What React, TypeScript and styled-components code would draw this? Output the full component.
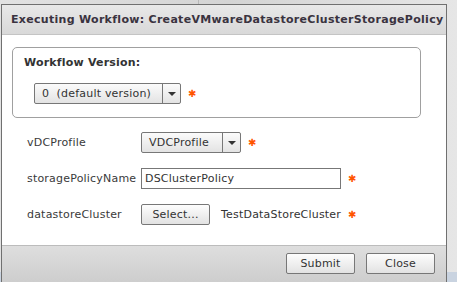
import styled, { createGlobalStyle } from "styled-components";

const GlobalStyle = createGlobalStyle`
  html, body {
    margin: 0;
    padding: 0;
    width: 457px;
    height: 282px;
    overflow: hidden;
  }
  body {
    font-family: "DejaVu Sans", Verdana, sans-serif;
    font-size: 11px;
    letter-spacing: 0.2px;
    color: #3a3a3a;
  }
`;

export default function App() {
  return (
    <>
      <GlobalStyle />
      <Backdrop>
        <Dialog>
          <Header>Executing Workflow: CreateVMwareDatastoreClusterStoragePolicy</Header>
          <Body>
            <VersionBox>
              <VersionTitle>Workflow Version:</VersionTitle>
              <FieldLine>
                <Dropdown $width={147}>
                  <DropdownText>0&nbsp;&nbsp;(default version)</DropdownText>
                  <DropdownArrow />
                </Dropdown>
                <Required>✱</Required>
              </FieldLine>
            </VersionBox>
            <Form>
              <Label>vDCProfile</Label>
              <FieldLine>
                <Dropdown $width={100}>
                  <DropdownText>VDCProfile</DropdownText>
                  <DropdownArrow />
                </Dropdown>
                <Required>✱</Required>
              </FieldLine>
              <Label>storagePolicyName</Label>
              <FieldLine>
                <TextInput defaultValue="DSClusterPolicy" />
                <Required>✱</Required>
              </FieldLine>
              <Label>datastoreCluster</Label>
              <FieldLine>
                <Button $width={69}>Select...</Button>
                <Value>TestDataStoreCluster</Value>
                <Required>✱</Required>
              </FieldLine>
            </Form>
          </Body>
          <Footer>
            <Button $width={69}>Submit</Button>
            <Button $width={69}>Close</Button>
          </Footer>
        </Dialog>
      </Backdrop>
    </>
  );
}

const Backdrop = styled.div`
  width: 457px;
  height: 282px;
  box-sizing: border-box;
  padding: 4px 10px 0 1px;
  background:
    linear-gradient(#c9d3e0, #c9d3e0) 0 272px / 100% 10px no-repeat,
    linear-gradient(#b8b8b8, #b8b8b8) 198px 0 / 1px 4px no-repeat,
    linear-gradient(90deg, #e2e2e2, #d4d4d4 50%, #e6e6e6);
  overflow: hidden;
`;

const Dialog = styled.div`
  width: 446px;
  height: 290px;
  box-sizing: border-box;
  border: 1px solid #707070;
  border-bottom: none;
  background: #fff;
  display: flex;
  flex-direction: column;
`;

const Header = styled.div`
  height: 30px;
  box-sizing: border-box;
  padding: 0 0 0 9px;
  display: flex;
  align-items: center;
  background: linear-gradient(#e8e8e8, #d9d9d9);
  border-bottom: 1px solid #c4c4c4;
  font-weight: bold;
  font-size: 11px;
  letter-spacing: 0.3px;
  color: #3a3340;
  white-space: nowrap;
`;

const Body = styled.div`
  height: 210px;
  box-sizing: border-box;
  padding: 12px 0 0 10px;
`;

const VersionBox = styled.div`
  width: 409px;
  height: 71px;
  box-sizing: border-box;
  border: 1px solid #a0a0a0;
  border-radius: 5px;
  padding: 8px 0 0 11px;
  display: flex;
  flex-direction: column;
  gap: 14px;
`;

const VersionTitle = styled.div`
  font-weight: bold;
  color: #333;
`;

const FieldLine = styled.div`
  display: flex;
  align-items: center;
  gap: 7px;
  padding-left: 10px;
`;

const Form = styled.div`
  display: grid;
  grid-template-columns: 114px auto;
  row-gap: 15px;
  align-items: center;
  padding: 14px 0 0 15px;

  ${FieldLine} {
    padding-left: 0;
  }
`;

const Label = styled.div`
  color: #3a3a3a;
`;

const Dropdown = styled.div<{ $width: number }>`
  width: ${(p) => p.$width}px;
  height: 21px;
  box-sizing: border-box;
  display: flex;
  border: 1px solid #777;
  border-radius: 2px;
  background: linear-gradient(#fbfbfb, #e3e3e3);
`;

const DropdownText = styled.div`
  flex: 1;
  display: flex;
  align-items: center;
  padding-left: 7px;
  color: #333;
  white-space: nowrap;
`;

const DropdownArrow = styled.div`
  width: 17px;
  border-left: 1px solid #777;
  position: relative;

  &::after {
    content: "";
    position: absolute;
    left: 5px;
    top: 8px;
    border-left: 4px solid transparent;
    border-right: 4px solid transparent;
    border-top: 4px solid #333;
  }
`;

const TextInput = styled.input`
  width: 200px;
  height: 21px;
  box-sizing: border-box;
  border: 1px solid #777;
  padding: 0 3px;
  font-family: inherit;
  font-size: 11px;
  letter-spacing: 0.2px;
  color: #333;
  outline: none;
`;

const Button = styled.button<{ $width: number }>`
  width: ${(p) => p.$width}px;
  height: 21px;
  box-sizing: border-box;
  border: 1px solid #777;
  border-radius: 2px;
  background: linear-gradient(#fdfdfd, #e2e2e2);
  font-family: inherit;
  font-size: 11px;
  letter-spacing: 0.2px;
  color: #333;
  padding: 0;
`;

const Value = styled.span`
  margin-left: 4px;
  color: #333;
`;

const Required = styled.span`
  color: #ff5500;
  font-size: 10px;
  font-weight: bold;
`;

const Footer = styled.div`
  flex: 1;
  display: flex;
  justify-content: flex-end;
  align-items: flex-start;
  gap: 11px;
  padding: 7px 11px 0 0;
  border-top: 1px solid #bcbcbc;
  background: linear-gradient(#dedede, #c8c8c8);
`;
